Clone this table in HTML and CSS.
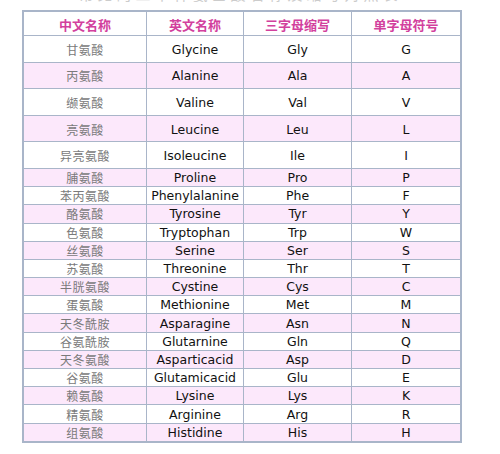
FILE: index.html
```html
<!DOCTYPE html>
<html lang="zh">
<head>
<meta charset="utf-8">
<title>氨基酸名称及缩写</title>
<link rel="stylesheet" href="styles.css">
</head>
<body>
<div class="page">
  <div class="cap"><span>常见的二十种氨基酸名称及缩写对照表</span></div>
  <table class="aa">
    <thead>
      <tr><th class="c1">中文名称</th><th class="c2">英文名称</th><th class="c3">三字母缩写</th><th class="c4">单字母符号</th></tr>
    </thead>
    <tbody>
      <tr class="tall"><td class="zh">甘氨酸</td><td>Glycine</td><td>Gly</td><td>G</td></tr>
      <tr class="tall pk"><td class="zh">丙氨酸</td><td>Alanine</td><td>Ala</td><td>A</td></tr>
      <tr class="tall"><td class="zh">缬氨酸</td><td>Valine</td><td>Val</td><td>V</td></tr>
      <tr class="tall pk"><td class="zh">亮氨酸</td><td>Leucine</td><td>Leu</td><td>L</td></tr>
      <tr class="tall"><td class="zh">异亮氨酸</td><td>Isoleucine</td><td>Ile</td><td>I</td></tr>
      <tr class="pk"><td class="zh">脯氨酸</td><td>Proline</td><td>Pro</td><td>P</td></tr>
      <tr><td class="zh">苯丙氨酸</td><td>Phenylalanine</td><td>Phe</td><td>F</td></tr>
      <tr class="pk"><td class="zh">酪氨酸</td><td>Tyrosine</td><td>Tyr</td><td>Y</td></tr>
      <tr><td class="zh">色氨酸</td><td>Tryptophan</td><td>Trp</td><td>W</td></tr>
      <tr class="pk"><td class="zh">丝氨酸</td><td>Serine</td><td>Ser</td><td>S</td></tr>
      <tr><td class="zh">苏氨酸</td><td>Threonine</td><td>Thr</td><td>T</td></tr>
      <tr class="pk"><td class="zh">半胱氨酸</td><td>Cystine</td><td>Cys</td><td>C</td></tr>
      <tr><td class="zh">蛋氨酸</td><td>Methionine</td><td>Met</td><td>M</td></tr>
      <tr class="pk"><td class="zh">天冬酰胺</td><td>Asparagine</td><td>Asn</td><td>N</td></tr>
      <tr><td class="zh">谷氨酰胺</td><td>Glutarnine</td><td>Gln</td><td>Q</td></tr>
      <tr class="pk"><td class="zh">天冬氨酸</td><td>Asparticacid</td><td>Asp</td><td>D</td></tr>
      <tr><td class="zh">谷氨酸</td><td>Glutamicacid</td><td>Glu</td><td>E</td></tr>
      <tr class="pk"><td class="zh">赖氨酸</td><td>Lysine</td><td>Lys</td><td>K</td></tr>
      <tr><td class="zh">精氨酸</td><td>Arginine</td><td>Arg</td><td>R</td></tr>
      <tr class="pk"><td class="zh">组氨酸</td><td>Histidine</td><td>His</td><td>H</td></tr>
    </tbody>
  </table>
</div>
</body>
</html>
```

FILE: styles.css
```css
html, body {
  margin: 0;
  padding: 0;
  background: #ffffff;
}

.page {
  padding: 0 0 0 22px;
  width: 436px;
}

.cap {
  height: 10px;
  overflow: hidden;
  text-align: center;
  color: #cccccc;
  font-family: "Noto Sans CJK SC", sans-serif;
  font-size: 15px;
}

.cap span {
  display: block;
  line-height: 16px;
  margin-top: -14.5px;
  letter-spacing: 4px;
}

.aa {
  border-collapse: collapse;
  width: 436px;
  border: 2px solid #a9b5c9;
  table-layout: fixed;
}

.aa th,
.aa td {
  border: 1px solid #a9b5c9;
  padding: 0;
  text-align: center;
  vertical-align: middle;
}

.aa th {
  height: 22px;
  font-family: "Noto Sans CJK SC", sans-serif;
  font-weight: bold;
  font-size: 13px;
  color: #d2409d;
  padding-top: 1px;
}

.c1 { width: 122px; }
.c2 { width: 96px; }
.c3 { width: 107px; }
.c4 { width: 108px; }

.aa td {
  height: 17.2px;
  line-height: 17px;
  font-family: "DejaVu Sans", Verdana, sans-serif;
  font-size: 12.5px;
  color: #111111;
}

.aa tr.tall td {
  height: 24.6px;
  padding-top: 1px;
}

.aa td.zh {
  font-family: "Noto Sans CJK SC", sans-serif;
  font-size: 12px;
  color: #7a7a7a;
  letter-spacing: 0.5px;
}

.aa tr.pk td {
  background: #fce8fb;
}
```
